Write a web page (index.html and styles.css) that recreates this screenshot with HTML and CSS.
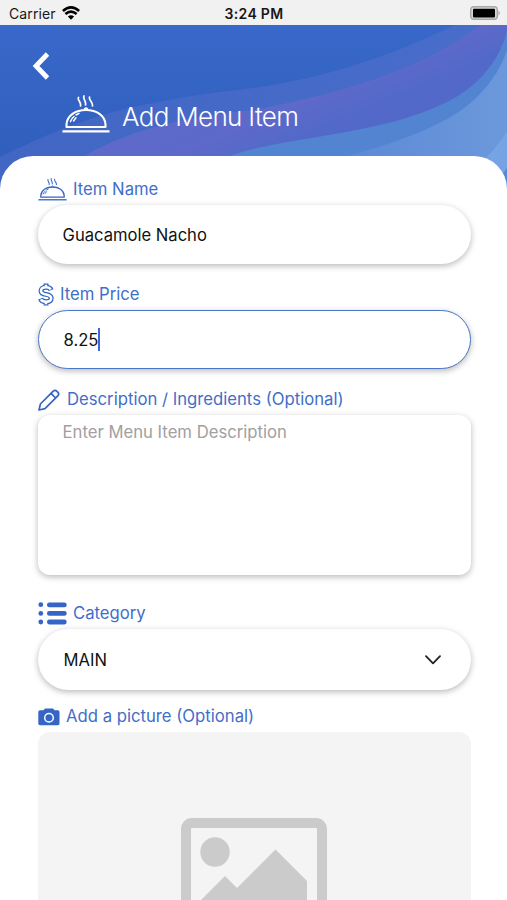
FILE: index.html
```html
<!DOCTYPE html>
<html lang="en">
<head>
<meta charset="utf-8">
<title>Add Menu Item</title>
<link rel="stylesheet" href="styles.css">
</head>
<body>
<svg class="defs" aria-hidden="true">
  <symbol id="cloche" viewBox="0 0 48 40">
    <g fill="none" stroke="currentColor" stroke-linecap="round">
      <path stroke-width="2.100" d="M4.500 32H43.500V29.500C43 20.500 34.500 15 24 15S5 20.500 4.500 29.500Z" stroke-linejoin="round"/>
      <path stroke-width="2.200" stroke-linecap="butt" d="M.5 36.300H47.500"/>
      <path stroke-width="1.500" d="M22.500 14Q24 12 25.500 14M8.500 26.500Q9.500 23.500 12 21.500M14 20L17 18.400M11.500 26L14 22.800"/>
      <path stroke-width="1.700" d="M16.500 2.500C15 5 19.500 7 18.500 11M22 1C20.500 4 24.500 6 23.500 10M27.500 2C26.500 5 31 7 30.500 11"/>
    </g>
  </symbol>
</svg>
<div class="screen">
  <div class="status">
    <div class="carrier"><span>Carrier</span>
      <svg width="18" height="14" viewBox="0 0 18 14"><path d="M9 13.700L5.900 10.500Q9 7.900 12.100 10.500Z"/><path class="wave" d="M3.400 7.900Q9 3.200 14.600 7.900M.9 4.900Q9 -2 17.100 4.900"/></svg>
    </div>
    <div class="time">3:24 PM</div>
    <svg class="battery" width="31" height="14" viewBox="0 0 31 14"><rect x=".7" y=".7" width="26.600" height="12.600" rx="3" fill="#d9d9d9" stroke="#a8a8a8" stroke-width="1.400"/><rect x="3" y="2.700" width="22" height="8.700" rx="1" fill="#000"/><path d="M28.500 4.200Q31 7 28.500 9.800Z" fill="#a8a8a8"/></svg>
  </div>
  <header class="hero">
    <svg class="waves" width="507" height="175" viewBox="0 25 507 175" preserveAspectRatio="none">
      <defs>
        <linearGradient id="base" x1="0" y1="0" x2="0" y2="1"><stop offset="0" stop-color="#3868c9"/><stop offset=".75" stop-color="#305fbe"/><stop offset="1" stop-color="#2d5aba"/></linearGradient>
        <linearGradient id="band" x1="0" y1="0" x2="1" y2="0"><stop offset="0" stop-color="#4266c4"/><stop offset="1" stop-color="#486dca"/></linearGradient>
        <linearGradient id="violet" gradientUnits="userSpaceOnUse" x1="290" y1="85" x2="316" y2="147"><stop offset="0" stop-color="#5d6aca"/><stop offset=".32" stop-color="#5e69c9"/><stop offset=".75" stop-color="#5369c9"/></linearGradient>
        <linearGradient id="sky" x1="0" y1="0" x2="1" y2="0"><stop offset="0" stop-color="#5b89d6"/><stop offset="1" stop-color="#6c98db"/></linearGradient>
      </defs>
      <path fill="url(#base)" d="M0 25H507V200H0Z"/>
      <path fill="url(#band)" d="M0 157C60 128 105 110 170 100C205 93 230 91 253 88C330 77 390 56 455 25H507V200H0Z"/>
      <path fill="url(#violet)" d="M70 165C130 125 190 118 253 110C345 93 425 68 480 25H507V200H70Z"/>
      <path fill="#5284d1" d="M215 162C250 146 290 142 335 134C380 126 415 118 449 101C484 83 501 55 507 31V200H215Z"/>
      <path fill="url(#sky)" d="M340 158C378 148 416 136 449 118C479 101 499 75 507 50V200H340Z"/>
      <path fill="#76a3e4" d="M484 160Q498 146 507 131V200H484Z"/>
      <path fill="#5a86d3" d="M501 176L507 168V200H501Z"/>
    </svg>
    <svg class="back" width="18" height="28" viewBox="0 0 18 28"><path d="M15.500 2L4 14L15.500 26"/></svg>
    <div class="title"><svg class="dish" width="48" height="40"><use href="#cloche"/></svg><h1>Add Menu Item</h1></div>
  </header>
  <main class="sheet">
    <div class="field">
      <div class="label"><svg class="ic-dish" width="29" height="24"><use href="#cloche"/></svg><span>Item Name</span></div>
      <div class="input"><span>Guacamole Nacho</span></div>
    </div>
    <div class="field">
      <div class="label"><svg class="ic-dollar" width="16" height="23" viewBox="0 0 16 23"><path class="rim" d="M8 .5V4M8 19V22.500M13.200 7.200C12.500 5.200 10.500 4.300 8 4.300C5 4.300 3 5.700 3 7.900C3 10.300 5 10.900 8 11.400C11 11.900 13.200 12.700 13.200 15.200C13.200 17.500 11 18.700 8 18.700C5.200 18.700 3.200 17.600 2.500 15.600"/><path class="core" d="M8 1.700V4M8 19V21.300M12.700 6.500C12 5 10.500 4.300 8 4.300C5 4.300 3 5.700 3 7.900C3 10.300 5 10.900 8 11.400C11 11.900 13.200 12.700 13.200 15.200C13.200 17.500 11 18.700 8 18.700C5.200 18.700 3.600 17.800 2.900 16.400"/></svg><span>Item Price</span></div>
      <div class="input focus"><span>8.25</span><i class="caret"></i></div>
    </div>
    <div class="field desc">
      <div class="label"><svg class="ic-pencil" width="22" height="22" viewBox="0 0 22 22"><path d="M1 21L2.400 15L15.200 2.200Q17 .5 18.700 2.200L19.900 3.400Q21.500 5 19.800 6.800L7 19.600ZM13 4.400L17.600 9"/></svg><span>Description / Ingredients (Optional)</span></div>
      <div class="area"><span>Enter Menu Item Description</span></div>
    </div>
    <div class="field select-field">
      <div class="label"><svg class="ic-list" width="29" height="23" viewBox="0 0 29 23"><g fill="currentColor"><circle cx="2.800" cy="2.700" r="2.400"/><circle cx="2.800" cy="11.400" r="2.400"/><circle cx="2.800" cy="20" r="2.400"/><rect x="9" y=".4" width="19.700" height="4.800" rx="2.300"/><rect x="9" y="9" width="19.700" height="4.800" rx="2.300"/><rect x="9" y="17.600" width="19.700" height="4.800" rx="2.300"/></g></svg><span>Category</span></div>
      <div class="input select"><span>MAIN</span><svg class="chev" width="16" height="10" viewBox="0 0 16 10"><path d="M1 1.200L8 8.300L15 1.200"/></svg></div>
    </div>
    <div class="field">
      <div class="label"><svg class="ic-camera" width="22" height="18" viewBox="0 0 22 18"><path fill="currentColor" d="M2 2.300H5.500L7 .5H15L16.500 2.300H20Q21.500 2.300 21.500 4V15.500Q21.500 17.300 20 17.300H2Q.3 17.300 .3 15.500V4Q.3 2.300 2 2.300Z"/><circle cx="11" cy="9.800" r="4.300" fill="none" stroke="#fff" stroke-width="1.500"/></svg><span>Add a picture (Optional)</span></div>
      <div class="picture"><svg width="146" height="146" viewBox="0 0 146 146"><rect x="5" y="5" width="136" height="136" rx="6" fill="none" stroke="#cbcbcb" stroke-width="10"/><g fill="#cbcbcb"><circle cx="34" cy="34" r="14.700"/><path d="M19 83L44 58L56 70L94.500 31.500L126 63V126H19Z"/></g></svg></div>
    </div>
  </main>
</div>
</body>
</html>
```

FILE: styles.css
```css
* { box-sizing: border-box; }
body { margin: 0; background: #fff; font-family: Inter, "Liberation Sans", sans-serif; }
svg { display: block; flex: none; }
.defs { position: absolute; width: 0; height: 0; }
.screen { height: 900px; overflow: hidden; }
.status { height: 25px; background: #f1f1f1; display: grid; grid-template-columns: 1fr auto 1fr; align-items: center; padding: 1px 6px 0 7px; color: #171717; }
.carrier { display: flex; align-items: center; gap: 6px; font-size: 14px; letter-spacing: 0.1px; padding-left: 2px; }
.wave { fill: none; stroke: #000; stroke-width: 2.6; }
.time { font-size: 14px; font-weight: 600; letter-spacing: 0.3px; }
.battery { justify-self: end; }
.hero { height: 131px; position: relative; color: #fff; padding: 27px 32px 0; }
.waves { position: absolute; left: 0; top: 0; }
.back { position: relative; fill: none; stroke: #fff; stroke-width: 4.8; }
.title { position: relative; display: flex; align-items: center; margin: 15px 0 0 30px; height: 40px; gap: 12px; }
h1 { margin: 3px 0 0; font-size: 26px; line-height: 32px; font-weight: 300; letter-spacing: -0.68px; white-space: nowrap; }
.sheet { position: relative; background: #fff; border-radius: 33px 33px 0 0; height: 760px; padding: 18px 36.5px 0 37.5px; }
.field { margin-bottom: 15px; }
.label { display: flex; align-items: center; height: 31px; color: #3f6ec9; font-size: 16.7px; white-space: nowrap; }
.label svg { color: #3565c5; }
.label span { line-height: 20px; margin-top: -1px; }
.ic-dish { margin-right: 6.5px; }
.ic-dollar { margin-right: 6.5px; fill: none; }
.rim { stroke: currentColor; stroke-width: 5; }
.core { stroke: #fff; stroke-width: 2.5; }
.ic-pencil { margin-right: 7.5px; fill: none; stroke: currentColor; stroke-width: 1.7; stroke-linejoin: round; }
.ic-list { margin-right: 6.5px; }
.ic-camera { margin-right: 6.5px; }
.input { display: flex; align-items: center; height: 59px; border-radius: 30px; background: #fff; padding: 0 25px; font-size: 16.6px; color: #111; box-shadow: 0 2px 6px rgba(0, 0, 0, 0.28); }
.focus { border: 1.5px solid #4a75c9; }
.caret { width: 2px; height: 23px; background: #3d66e0; }
.desc { margin-bottom: 23px; }
.area { height: 160px; border-radius: 12px; padding: 7px 25px; background: #fff; color: #a0a0a0; font-size: 16.7px; line-height: 20px; box-shadow: 0 2px 6px rgba(0, 0, 0, 0.28); }
.select { height: 61px; border-radius: 31px; justify-content: space-between; padding: 0 30px 0 26px; }
.select-field { margin-bottom: 11px; }
.chev { fill: none; stroke: #222; stroke-width: 1.8; stroke-linecap: round; stroke-linejoin: round; }
.picture { height: 260px; border-radius: 12px; background: #f4f4f4; display: flex; justify-content: center; padding-top: 86px; }
```
